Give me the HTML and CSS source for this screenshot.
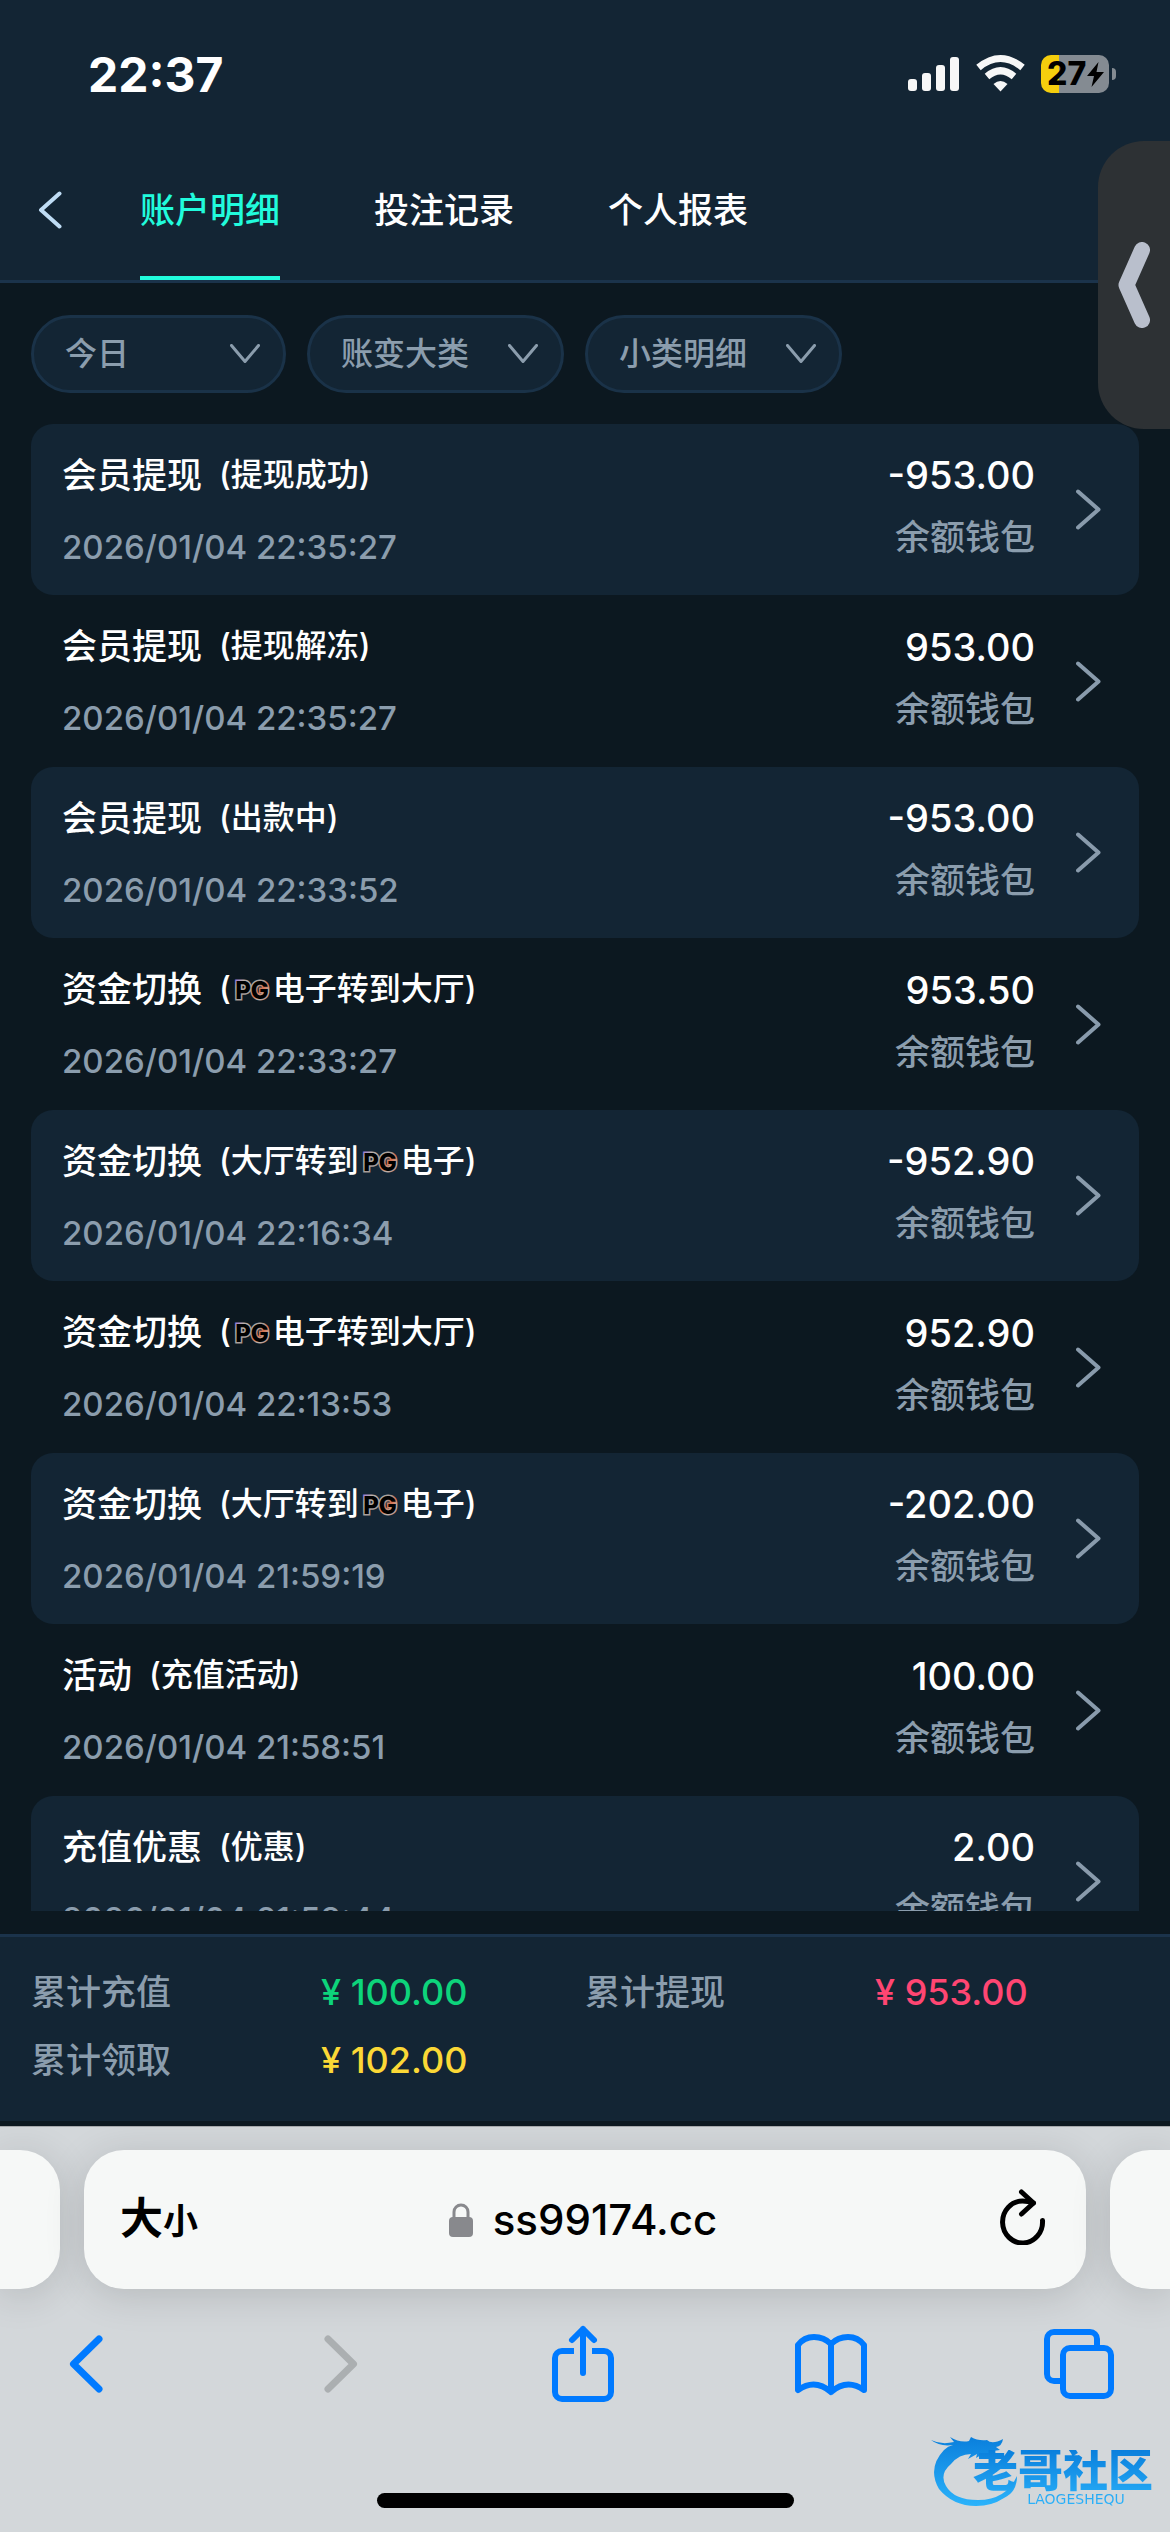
FILE: index.html
```html
<!DOCTYPE html>
<html lang="zh-CN">
<head>
<meta charset="utf-8">
<meta name="viewport" content="width=device-width, initial-scale=1">
<title>账户明细</title>
<link rel="stylesheet" href="styles.css">
</head>
<body>
<svg class="defs" width="0" height="0" aria-hidden="true">
  <defs>
    <linearGradient id="pg-line" x1="0" y1="0" x2="1" y2="1">
      <stop offset="0" stop-color="#8a5cf0"/><stop offset=".2" stop-color="#b9b0aa"/>
      <stop offset=".5" stop-color="#a59c98"/><stop offset=".62" stop-color="#d8704e"/>
      <stop offset=".75" stop-color="#b9b0aa"/><stop offset="1" stop-color="#c9705c"/>
    </linearGradient>
    <symbol id="pg" viewBox="0 0 42 26"><text class="pg-text" x="21" y="23" text-anchor="middle">PG</text></symbol>
    <symbol id="next" viewBox="0 0 25 41"><path d="M2 2.500 22.500 20.500 2 38.500" fill="none" stroke="#899bac" stroke-width="4" stroke-linecap="round" stroke-linejoin="round"/></symbol>
    <symbol id="down" viewBox="0 0 30 20"><path d="M1.500 1.500 15 17.500 28.500 1.500" fill="none" stroke="#8b9dad" stroke-width="3" stroke-linecap="round" stroke-linejoin="round"/></symbol>
  </defs>
</svg>

<header class="top">
  <div class="status">
    <time class="clock">22:37</time>
    <div class="indicators">
      <svg width="52" height="40" viewBox="0 0 52 40" fill="#f7f7f7"><rect x="0" y="25" width="9" height="12" rx="3"/><rect x="14" y="19" width="9" height="18" rx="3"/><rect x="28" y="11" width="9" height="26" rx="3"/><rect x="42" y="3" width="9" height="34" rx="3"/></svg>
      <svg width="49" height="40" viewBox="0 0 49 40" fill="none" stroke="#f7f7f7" stroke-width="7"><path d="M2.500 13.500Q24.500-4.500 46.500 13.500"/><path d="M11 22.500Q24.500 11 38 22.500"/><path d="M17.500 30Q24.500 24 31.500 30L24.500 37.500Z" fill="#f7f7f7" stroke="none"/></svg>
      <span class="battery"><span class="cell"><span class="percent">27</span><svg width="17" height="25" viewBox="0 0 17 25"><path d="M11.500 0 0 14h7L4.500 25 17 10H9.500Z"/></svg></span><span class="cap"></span></span>
    </div>
  </div>
  <nav class="tabs">
    <button class="back" type="button" aria-label="返回"><svg width="24" height="38" viewBox="0 0 24 38"><path d="M21.500 2.500 3 19l18.500 16.500" fill="none" stroke="#bfdcf4" stroke-width="4" stroke-linecap="round" stroke-linejoin="round"/></svg></button>
    <a class="tab active" href="#account">账户明细</a>
    <a class="tab" href="#bets">投注记录</a>
    <a class="tab" href="#report">个人报表</a>
  </nav>
</header>

<button class="drawer" type="button" aria-label="展开"><svg width="32" height="86" viewBox="0 0 32 86"><path d="M24 8 8.500 43 24 78" fill="none" stroke="#b9bfcc" stroke-width="16" stroke-linecap="round" stroke-linejoin="round"/></svg></button>

<form class="filters">
  <label class="filter"><select aria-label="日期"><option>今日</option></select><svg width="30" height="20"><use href="#down"/></svg></label>
  <label class="filter wide"><select aria-label="账变大类"><option>账变大类</option></select><svg width="30" height="20"><use href="#down"/></svg></label>
  <label class="filter wide"><select aria-label="小类明细"><option>小类明细</option></select><svg width="30" height="20"><use href="#down"/></svg></label>
</form>

<main class="list-area">
<ul class="list">
  <li class="row"><div class="info"><h2>会员提现<small>(提现成功)</small></h2><time>2026/01/04 22:35:27</time></div><div class="sum"><b>-953.00</b><span>余额钱包</span></div><svg width="25" height="41"><use href="#next"/></svg></li>
  <li class="row"><div class="info"><h2>会员提现<small>(提现解冻)</small></h2><time>2026/01/04 22:35:27</time></div><div class="sum"><b>953.00</b><span>余额钱包</span></div><svg width="25" height="41"><use href="#next"/></svg></li>
  <li class="row"><div class="info"><h2>会员提现<small>(出款中)</small></h2><time>2026/01/04 22:33:52</time></div><div class="sum"><b>-953.00</b><span>余额钱包</span></div><svg width="25" height="41"><use href="#next"/></svg></li>
  <li class="row"><div class="info"><h2>资金切换<small>(<svg class="pg" width="42" height="26"><use href="#pg"/></svg>电子转到大厅)</small></h2><time>2026/01/04 22:33:27</time></div><div class="sum"><b>953.50</b><span>余额钱包</span></div><svg width="25" height="41"><use href="#next"/></svg></li>
  <li class="row"><div class="info"><h2>资金切换<small>(大厅转到<svg class="pg" width="42" height="26"><use href="#pg"/></svg>电子)</small></h2><time>2026/01/04 22:16:34</time></div><div class="sum"><b>-952.90</b><span>余额钱包</span></div><svg width="25" height="41"><use href="#next"/></svg></li>
  <li class="row"><div class="info"><h2>资金切换<small>(<svg class="pg" width="42" height="26"><use href="#pg"/></svg>电子转到大厅)</small></h2><time>2026/01/04 22:13:53</time></div><div class="sum"><b>952.90</b><span>余额钱包</span></div><svg width="25" height="41"><use href="#next"/></svg></li>
  <li class="row"><div class="info"><h2>资金切换<small>(大厅转到<svg class="pg" width="42" height="26"><use href="#pg"/></svg>电子)</small></h2><time>2026/01/04 21:59:19</time></div><div class="sum"><b>-202.00</b><span>余额钱包</span></div><svg width="25" height="41"><use href="#next"/></svg></li>
  <li class="row"><div class="info"><h2>活动<small>(充值活动)</small></h2><time>2026/01/04 21:58:51</time></div><div class="sum"><b>100.00</b><span>余额钱包</span></div><svg width="25" height="41"><use href="#next"/></svg></li>
  <li class="row"><div class="info"><h2>充值优惠<small>(优惠)</small></h2><time>2026/01/04 21:58:44</time></div><div class="sum"><b>2.00</b><span>余额钱包</span></div><svg width="25" height="41"><use href="#next"/></svg></li>
</ul>
</main>

<dl class="totals">
  <div><dt>累计充值</dt><dd class="green">¥ 100.00</dd></div>
  <div><dt>累计提现</dt><dd class="red">¥ 953.00</dd></div>
  <div><dt>累计领取</dt><dd class="yellow">¥ 102.00</dd></div>
</dl>

<footer class="browser">
  <div class="address-row">
    <span class="peek left"></span>
    <div class="address">
      <button class="text-size" type="button" aria-label="文字大小"><span class="big">大</span><span class="little">小</span></button>
      <a class="url" href="#site"><svg width="24" height="34" viewBox="0 0 24 34"><path d="M5 16V9a7 7 0 0 1 14 0v7" fill="none" stroke="#88898d" stroke-width="3"/><rect x="0" y="14" width="24" height="20" rx="4" fill="#88898d"/></svg>ss99174.cc</a>
      <button class="reload" type="button" aria-label="刷新"><svg width="46" height="56" viewBox="0 0 46 56" fill="none" stroke="#000" stroke-width="5" stroke-linecap="round" stroke-linejoin="round"><path d="M33.500 14Q28 12 22.500 12A20 21 0 1 0 42.500 31.500"/><path d="M21.500 3 33.500 14 21.500 25"/></svg></button>
    </div>
    <span class="peek right"></span>
  </div>
  <div class="toolbar">
    <button type="button" aria-label="后退"><svg width="34" height="60" viewBox="0 0 34 60"><path d="M30 5 4.500 30 30 55" fill="none" stroke="#007aff" stroke-width="7" stroke-linecap="round" stroke-linejoin="round"/></svg></button>
    <button class="forward" type="button" aria-label="前进" disabled><svg width="34" height="60" viewBox="0 0 34 60"><path d="M4 5 29.500 30 4 55" fill="none" stroke="#abafb1" stroke-width="7" stroke-linecap="round" stroke-linejoin="round"/></svg></button>
    <button type="button" aria-label="分享"><svg width="62" height="80" viewBox="-2 0 62 80" fill="none" stroke="#007aff" stroke-width="6" stroke-linejoin="round"><path d="M20 27H8a7 7 0 0 0-7 7v34a7 7 0 0 0 7 7h42a7 7 0 0 0 7-7V34a7 7 0 0 0-7-7H38"/><path d="M29 5v44M18 16 29 5l11 11" stroke-linecap="round"/></svg></button>
    <button type="button" aria-label="书签"><svg width="74" height="64" viewBox="0 0 74 64" fill="none" stroke="#007aff" stroke-width="6" stroke-linecap="round" stroke-linejoin="round"><path d="M37 11v49Q21 46 4 58V13Q10 5 20 5T37 12Q44 5 54 5t16 8v45Q53 46 37 60"/></svg></button>
    <button type="button" aria-label="标签页"><svg width="70" height="70" viewBox="0 0 70 70" fill="none" stroke="#007aff" stroke-width="6"><path d="M17 52h-7a7 7 0 0 1-7-7V10a7 7 0 0 1 7-7h36a7 7 0 0 1 7 7v7"/><rect x="19" y="19" width="48" height="48" rx="7"/></svg></button>
  </div>
  <div class="home"></div>
</footer>

<div class="mark">
  <svg class="dragon" width="92" height="78" viewBox="0 0 92 78">
    <defs><linearGradient id="blue" x1="0" y1="0" x2="0" y2="1"><stop offset="0" stop-color="#0a7fdc"/><stop offset="1" stop-color="#2bb3fb"/></linearGradient></defs>
    <path fill="url(#blue)" d="M0 12q10 5 23 2L19 9q10 6 19 4l2-4q7 4 16 3 5 5 16-1-1 7-7 8l4 3-7 1 3 4-9-1 2 4-8-3-5 3 1-4-9 5 3-5q-12 0-20 10Q8 46 15 58q8 14 32 14 28 0 39-24 0 16-13 22-12 8-28 8Q22 78 8 61-4 40 13 22q4-4 9-5Q9 19 0 12Z"/>
  </svg>
  <div class="mark-name">老哥社区<small>LAOGESHEQU</small></div>
</div>
</body>
</html>
```
FILE: styles.css
```css
* { box-sizing: border-box; margin: 0; padding: 0; }

body {
  display: flex;
  flex-direction: column;
  height: 100vh;
  overflow: hidden;
  position: relative;
  background: #0c1820;
  color: #fff;
  font-family: Inter, "Noto Sans CJK SC", sans-serif;
  font-size: 35px;
  font-weight: 500;
}

button { border: 0; background: none; font: inherit; color: inherit; }
a { color: inherit; text-decoration: none; }
svg { display: block; flex: none; }
.defs { position: absolute; }

/* status bar and tabs */
.top { background: #132534; border-bottom: 3px solid #1b334b; }
.status {
  display: flex;
  justify-content: space-between;
  align-items: center;
  height: 140px;
  padding: 8px 54px 0 88px;
}
.clock { font-size: 48px; font-weight: 700; }
.indicators { display: flex; align-items: center; gap: 16px; }
.battery { display: flex; align-items: center; gap: 3px; }
.cell {
  display: flex;
  align-items: center;
  gap: 1px;
  width: 68px;
  height: 38px;
  padding-left: 6px;
  border-radius: 10px;
  background: linear-gradient(90deg, #f5ce0d 18px, #848b92 18px);
  color: #000;
}
.percent { font-size: 32px; font-weight: 800; line-height: 38px; }
.cap { width: 4px; height: 12px; border-radius: 0 6px 6px 0; background: #848b92; }

.tabs { display: flex; height: 140px; }
.back { display: flex; align-items: center; width: 140px; padding-left: 38px; }
.tab {
  display: flex;
  align-items: center;
  margin-right: 94px;
  padding-bottom: 2px;
  border-bottom: 4px solid transparent;
}
.tab.active { color: #21fbdc; border-color: #21fbdc; }

.drawer {
  position: absolute;
  top: 141px;
  right: 0;
  display: flex;
  align-items: center;
  width: 72px;
  height: 288px;
  padding-left: 20px;
  border-radius: 46px 0 0 46px;
  background: #2d3134;
}

/* filters */
.filters { display: flex; gap: 21px; padding: 32px 31px 31px; }
.filter {
  display: grid;
  align-items: center;
  width: 255px;
  height: 78px;
  border: 3px solid #1a3248;
  border-radius: 39px;
  background: #132534;
}
.filter.wide { width: 257px; }
.filter > * { grid-area: 1 / 1; }
.filter select {
  height: 72px;
  padding-left: 31px;
  padding-bottom: 2px;
  border: 0;
  appearance: none;
  background: none;
  color: #8b9dad;
  font: inherit;
  font-size: 32px;
}
.filter svg { justify-self: end; margin-right: 23px; pointer-events: none; }

/* records */
.list-area { flex: 1; min-height: 0; margin: 0 31px 23px; overflow: hidden; }
.list { list-style: none; }
.row {
  display: flex;
  align-items: center;
  gap: 41px;
  height: 172px;
  padding-right: 38px;
  padding-left: 31px;
  border-radius: 22px;
}
.row:nth-child(odd) { height: 171px; background: #132534; }
.info { flex: 1; display: grid; gap: 30px; padding-top: 2px; }
.info h2 { display: flex; align-items: center; gap: 17px; font-size: 35px; font-weight: 500; line-height: 42px; }
.info small { display: flex; align-items: center; font-size: 32px; }
.info time { color: #8b9dad; font-size: 33px; line-height: 42px; }
.sum { display: grid; gap: 20px; padding-bottom: 7px; text-align: right; line-height: 42px; }
.sum b { font-size: 38px; font-weight: 500; }
.sum span { color: #8b9dad; }
.pg-text {
  fill: #000;
  stroke: url(#pg-line);
  stroke-width: 3px;
  paint-order: stroke;
  font-family: Inter, sans-serif;
  font-size: 24px;
  font-weight: 800;
}

/* totals */
.totals {
  display: grid;
  grid-template-columns: 554px 1fr;
  row-gap: 26px;
  margin-bottom: 5px;
  padding: 34px 31px 40px;
  border-top: 3px solid #1b334b;
  background: #132534;
  line-height: 42px;
}
.totals div { display: flex; }
.totals dt { width: 290px; color: #8b9dad; }
.totals dd { font-size: 36px; }
.green { color: #0dd47b; }
.red { color: #ff4672; }
.yellow { color: #fbd836; }

/* browser bar */
.browser { overflow: hidden; border-top: 1px solid #a5a8ab; background: #d3d7da; color: #000; }
.address-row { display: flex; gap: 24px; padding-top: 23px; }
.address, .peek { height: 139px; background: #f6f8f7; box-shadow: 0 6px 40px rgba(0, 0, 0, .14); }
.peek { width: 60px; }
.peek.left { border-radius: 0 40px 40px 0; }
.peek.right { border-radius: 40px 0 0 40px; }
.address {
  flex: 1;
  display: grid;
  grid-template-columns: 1fr auto 1fr;
  align-items: center;
  padding: 0 40px 0 36px;
  border-radius: 40px;
}
.text-size { display: flex; align-items: baseline; font-weight: 700; line-height: 60px; }
.big { font-size: 43px; }
.little { font-size: 35px; }
.url { display: flex; align-items: center; gap: 20px; font-size: 42px; font-weight: 500; }
.reload { justify-self: end; padding-bottom: 5px; }
.toolbar { display: flex; align-items: center; justify-content: space-between; height: 152px; padding: 0 54px 2px 49px; }
.toolbar button { display: flex; justify-content: center; width: 74px; }
.toolbar .forward { padding-left: 14px; }
.home { width: 417px; height: 15px; margin: 52px auto 24px; border-radius: 8px; background: #000; }

.mark {
  position: absolute;
  right: 17px;
  bottom: 26px;
  width: 222px;
  height: 78px;
}
.dragon { position: absolute; left: 0; top: 0; }
.mark-name {
  position: absolute;
  right: 0;
  top: 22px;
  display: grid;
  justify-items: center;
  background: linear-gradient(#0a7fdc, #2bb3fb);
  background-clip: text;
  color: transparent;
  font-size: 45px;
  font-weight: 900;
  line-height: 42px;
}
.mark-name small {
  padding-left: 26px;
  font-family: "DejaVu Sans", sans-serif;
  font-size: 14px;
  font-weight: 400;
  line-height: 14px;
}
```
